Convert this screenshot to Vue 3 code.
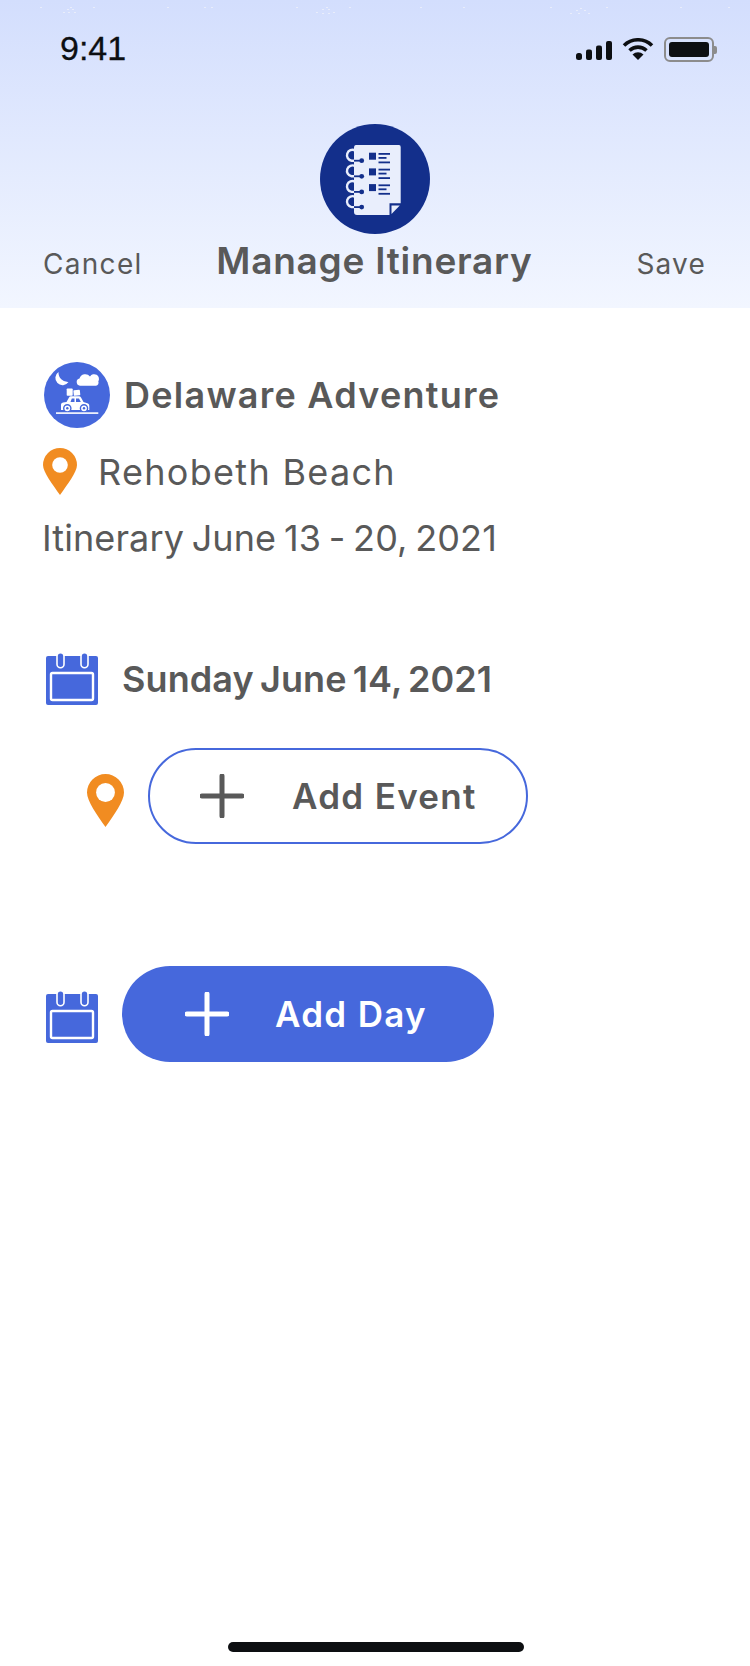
<script setup>
const logoRows = [0, 15.7, 31.4]
const ringRows = [0, 15.6, 31.2, 46.4]
const specks = [
  [40, 7], [93, 7], [70, 7], [67, 9], [72, 9], [63, 12], [68, 12], [74, 12],
  [167, 7], [204, 7], [211, 7], [296, 7], [349, 7], [326, 7], [322, 9], [328, 9],
  [316, 12], [322, 13], [328, 13], [333, 12], [580, 8], [576, 10], [584, 10],
  [570, 13], [578, 13], [588, 13], [550, 7], [606, 7], [420, 7], [463, 7], [680, 7], [728, 7]
]
</script>

<template>
  <div class="page">
    <svg class="specks" viewBox="0 0 750 20" width="750" height="20" aria-hidden="true">
      <rect v-for="s in specks" :key="s.join()" :x="s[0]" :y="s[1]" width="2" height="1" fill="#e9edfb" />
    </svg>
    <header class="header">
      <div class="status">
        <span class="time">9:41</span>
        <div class="status-icons">
          <svg class="signal" viewBox="0 0 36 19" width="36" height="19">
            <rect x="0" y="12" width="6" height="7" rx="2.5" />
            <rect x="10" y="8.5" width="6" height="10.5" rx="2" />
            <rect x="20" y="4.5" width="6" height="14.5" rx="2" />
            <rect x="30" y="0" width="6" height="19" rx="2" />
          </svg>
          <svg class="wifi" viewBox="0 0 32 22" width="32" height="22">
            <path d="M2 7.5 A20 20 0 0 1 30 7.5" fill="none" stroke="#0d0f12" stroke-width="3.6" />
            <path d="M7.5 12.5 A12.5 12.5 0 0 1 24.5 12.5" fill="none" stroke="#0d0f12" stroke-width="3.6" />
            <path d="M16 22 L10.5 16.5 A8 8 0 0 1 21.5 16.5 Z" fill="#0d0f12" />
          </svg>
          <div class="battery">
            <div class="battery-body"><div class="battery-fill"></div></div>
            <div class="battery-nub"></div>
          </div>
        </div>
      </div>
      <div class="logo">
        <svg viewBox="0 0 110 110" width="110" height="110">
          <circle cx="55" cy="55" r="55" fill="#132f8b" />
          <path d="M36 21 H79 Q80.7 21 80.7 23 V79.3 H69.5 V91 H37 Q34 91 34 88 V24 Q34 21 36 21 Z" fill="#e9eefc" />
          <path d="M71.5 81.5 H79.8 L71.5 90 Z" fill="#e9eefc" />
          <g v-for="y in ringRows" :key="y">
            <path :d="`M41.7 ${36.7 + y} H31.5 A5.5 5.5 0 1 1 35 ${26.4 + y}`" fill="none" stroke="#e9eefc" stroke-width="2.4" />
            <path :d="`M34 ${36.7 + y} H41.7`" fill="none" stroke="#132f8b" stroke-width="1.8" />
            <circle cx="41.7" :cy="36.7 + y" r="2.4" fill="#132f8b" />
          </g>
          <g v-for="y in logoRows" :key="y" fill="#132f8b">
            <rect x="49" :y="28.7 + y" width="7" height="7" />
            <rect x="58.5" :y="29 + y" width="11.5" height="1.8" />
            <rect x="58.5" :y="33 + y" width="8" height="1.8" />
            <rect x="58.5" :y="37.5 + y" width="11.5" height="1.8" />
          </g>
        </svg>
      </div>
      <nav class="nav">
        <span class="nav-link">Cancel</span>
        <h1 class="title">Manage Itinerary</h1>
        <span class="nav-link save">Save</span>
      </nav>
    </header>

    <main class="main">
      <div class="trip">
        <svg viewBox="0 0 66 66" width="66" height="66" class="no-shrink">
          <circle cx="33" cy="33" r="33" fill="#4668dc" />
          <path d="M14.5 10 A7.2 7.2 0 1 0 24.5 20 A9.5 9.5 0 0 1 14.5 10 Z" fill="#fff" />
          <path d="M36 23.7 A3.6 3.6 0 0 1 35.5 16.6 A6 6 0 0 1 46 14.5 A4.6 4.6 0 0 1 54.3 19.5 A3 3 0 0 1 52 23.7 Z" fill="#fff" />
          <rect x="22.7" y="26.5" width="6" height="7.2" rx="0.8" fill="#fff" />
          <rect x="29.5" y="28" width="6.5" height="5.7" rx="0.8" fill="#fff" transform="rotate(-6 32 30)" />
          <path d="M17 48 V42.5 Q17 41 19 40.5 L22.5 40 L25 35.5 Q25.5 34.3 27 34.3 H35 Q36.3 34.3 37 35.5 L39.5 40 L44 41.5 Q45.5 42 45.3 44 V48 Z" fill="#fff" />
          <path d="M26.5 40 L27.8 36.5 H30.5 V40 Z M32 36.5 H35 L36.8 40 H32 Z" fill="#4668dc" />
          <circle cx="23.3" cy="46.3" r="3.6" fill="#fff" stroke="#4668dc" stroke-width="1.4" />
          <circle cx="40" cy="46.3" r="3.6" fill="#fff" stroke="#4668dc" stroke-width="1.4" />
          <circle cx="23.3" cy="46.3" r="1.2" fill="#4668dc" />
          <circle cx="40" cy="46.3" r="1.2" fill="#4668dc" />
          <rect x="12" y="50.3" width="42.3" height="1.6" fill="#fff" />
        </svg>
        <span class="trip-name">Delaware Adventure</span>
      </div>
      <div class="place">
        <svg viewBox="0 0 34 47" width="34" height="47" class="no-shrink">
          <path d="M17 0 A17 17 0 0 1 34 17 C34 24 24 37 17 47 C10 37 0 24 0 17 A17 17 0 0 1 17 0 Z" fill="#f18c21" />
          <circle cx="17" cy="17" r="7.8" fill="#fff" />
        </svg>
        <span class="place-name">Rehobeth Beach</span>
      </div>
      <p class="dates">Itinerary June 13 - 20, 2021</p>

      <div class="day">
        <svg viewBox="0 0 52 53" width="52" height="53" class="cal">
          <rect x="0" y="4" width="52" height="49" rx="2" fill="#4668dc" />
          <rect x="11" y="0.7" width="7" height="15" rx="3.5" fill="#4668dc" stroke="#fff" stroke-width="1.6" />
          <rect x="35" y="0.7" width="7" height="15" rx="3.5" fill="#4668dc" stroke="#fff" stroke-width="1.6" />
          <rect x="5" y="21" width="42" height="27" rx="1.5" fill="none" stroke="#fff" stroke-width="2.4" />
        </svg>
        <span class="day-name">Sunday June 14, 2021</span>
      </div>

      <div class="event-row">
        <svg viewBox="0 0 37 53" width="37" height="53" class="pin-low">
          <path d="M18.5 0 A18.5 18.5 0 0 1 37 18.5 C37 27 27 41 18.5 53 C10 41 0 27 0 18.5 A18.5 18.5 0 0 1 18.5 0 Z" fill="#f18c21" />
          <circle cx="18.5" cy="18.5" r="9.4" fill="#fff" />
        </svg>
        <div class="btn btn-outline">
          <svg viewBox="0 0 44 44" width="44" height="44" class="plus">
            <path d="M22 2 V42 M2 22 H42" fill="none" stroke="#595959" stroke-width="5" stroke-linecap="round" />
          </svg>
          <span>Add Event</span>
        </div>
      </div>

      <div class="addday-row">
        <svg viewBox="0 0 52 53" width="52" height="53" class="cal cal-low">
          <rect x="0" y="4" width="52" height="49" rx="2" fill="#4668dc" />
          <rect x="11" y="0.7" width="7" height="15" rx="3.5" fill="#4668dc" stroke="#fff" stroke-width="1.6" />
          <rect x="35" y="0.7" width="7" height="15" rx="3.5" fill="#4668dc" stroke="#fff" stroke-width="1.6" />
          <rect x="5" y="21" width="42" height="27" rx="1.5" fill="none" stroke="#fff" stroke-width="2.4" />
        </svg>
        <div class="btn btn-solid">
          <svg viewBox="0 0 44 44" width="44" height="44" class="plus">
            <path d="M22 2 V42 M2 22 H42" fill="none" stroke="#fff" stroke-width="5" stroke-linecap="round" />
          </svg>
          <span>Add Day</span>
        </div>
      </div>
    </main>

    <div class="home-indicator"></div>
  </div>
</template>

<style scoped>
.page {
  position: relative;
  width: 750px;
  height: 1666px;
  display: flex;
  flex-direction: column;
  background: #fff;
  color: #595959;
  font-family: Inter, "Open Sans", sans-serif;
  overflow: hidden;
}
.specks { position: absolute; top: 0; left: 0; }
.header {
  height: 308px;
  flex: none;
  background: linear-gradient(180deg, #d3defd 0%, #f2f6ff 100%);
}
.status {
  height: 124px;
  display: flex;
  justify-content: space-between;
  align-items: flex-start;
  padding: 30px 33px 0 60px;
  box-sizing: border-box;
}
.time {
  font-family: "Liberation Sans", sans-serif;
  font-size: 34px;
  line-height: 36px;
  color: #0d0f12;
  -webkit-text-stroke: 0.3px #0d0f12;
}
.status-icons {
  display: flex;
  align-items: flex-end;
  gap: 10px;
  margin-top: 7px;
  margin-left: auto;
}
.signal rect { fill: #0d0f12; }
.signal, .wifi { margin-bottom: 2px; }
.battery { display: flex; align-items: center; }
.battery-body {
  width: 50px;
  height: 25px;
  box-sizing: border-box;
  border: 2px solid #8c8c8c;
  border-radius: 6px;
  padding: 3px;
}
.battery-fill { height: 100%; background: #0d0f12; border-radius: 3px; }
.battery-nub {
  width: 3px;
  height: 8px;
  background: #8c8c8c;
  border-radius: 0 2px 2px 0;
}
.logo { display: flex; justify-content: center; height: 110px; }
.nav {
  display: grid;
  grid-template-columns: 1fr auto 1fr;
  align-items: baseline;
  padding: 5px 44px 0 43px;
}
.nav-link { font-size: 28px; line-height: 44px; letter-spacing: 1.3px; }
.save { justify-self: end; letter-spacing: 1.2px; }
.title {
  margin: 0;
  font-size: 37px;
  line-height: 44px;
  font-weight: 600;
  letter-spacing: 0.75px;
}
.main {
  padding: 54px 0 0 43px;
  flex: 1;
}
.no-shrink { flex: none; display: block; }
.pin-low { flex: none; display: block; margin-top: 8px; }
.cal { flex: none; display: block; margin-left: 3px; }
.cal-low { margin-top: 5px; }
.trip { display: flex; align-items: center; gap: 14px; margin-left: 1px; height: 66px; }
.trip-name { font-size: 36px; font-weight: 600; letter-spacing: 1.25px; }
.place { display: flex; align-items: center; gap: 21px; margin-top: 20px; height: 47px; }
.place-name { font-size: 36px; letter-spacing: 1.3px; }
.dates {
  margin: 21px 0 0 -1px;
  font-size: 36px;
  line-height: 44px;
  letter-spacing: 0.1px;
  word-spacing: -2.5px;
}
.day { display: flex; align-items: center; gap: 24px; margin-top: 92px; height: 53px; }
.day-name { font-size: 36px; font-weight: 600; letter-spacing: 0.1px; word-spacing: -3px; }
.event-row { display: flex; align-items: center; gap: 24px; margin-top: 43px; margin-left: 44px; }
.btn {
  display: flex;
  align-items: center;
  box-sizing: border-box;
  border-radius: 48px;
  font-size: 35px;
  font-weight: 600;
  letter-spacing: 1.3px;
}
.btn-outline {
  width: 380px;
  height: 96px;
  border: 2px solid #4668dc;
  padding-left: 50px;
  gap: 48px;
}
.btn-solid {
  width: 372px;
  height: 96px;
  background: #4668dc;
  color: #fff;
  padding-left: 63px;
  gap: 46px;
}
.addday-row { display: flex; align-items: center; gap: 24px; margin-top: 122px; }
.plus { flex: none; display: block; }
.home-indicator {
  flex: none;
  width: 296px;
  height: 10px;
  border-radius: 5px;
  background: #0d0f12;
  margin: 0 0 14px 228px;
}
</style>
